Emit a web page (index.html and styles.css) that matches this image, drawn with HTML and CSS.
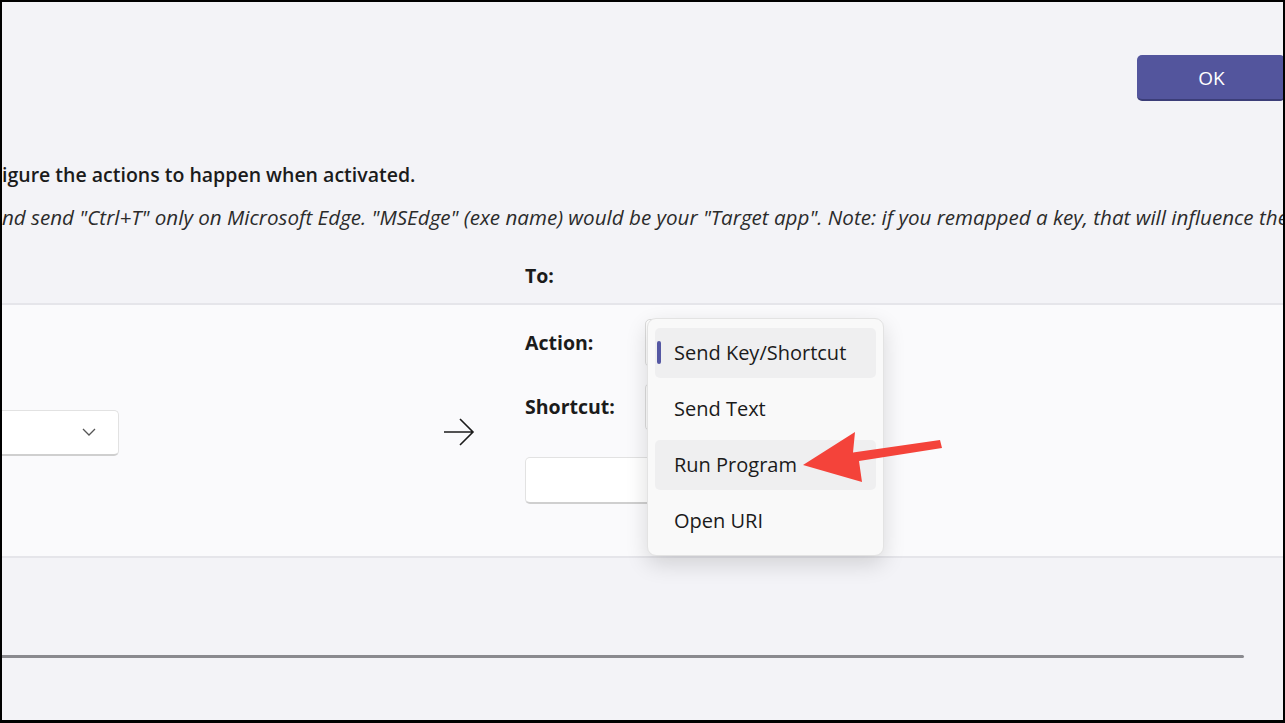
FILE: index.html
```html
<!DOCTYPE html>
<html>

<head>
    <meta name="viewport" content="width=device-width,initial-scale=1.0">
    <title>Remap shortcuts</title>
    <link rel="stylesheet" href="styles.css">
</head>

<body>
    <div class="frame">
        <div class="topbar">
            <button class="okBtn">OK</button>
        </div>

        <p class="title">igure the actions to happen when activated.</p>
        <p class="desc">nd send "Ctrl+T" only on Microsoft Edge. "MSEdge" (exe name) would be your "Target app". Note: if you remapped a key, that will influence the</p>

        <div class="headRow">
            <span class="label toLabel">To:</span>
        </div>

        <div class="panel">
            <div class="fromCol">
                <div class="combo">
                    <svg class="chev" width="14" height="8" viewBox="0 0 14 8">
                        <path d="M1 1 L7 7 L13 1" fill="none" stroke="#555" stroke-width="1.3" />
                    </svg>
                </div>
            </div>

            <div class="arrowCol">
                <svg width="32" height="28" viewBox="0 0 32 28">
                    <path d="M1 14 H30 M17 1 L30 14 L17 27" fill="none" stroke="#1b1b1b" stroke-width="1.6" />
                </svg>
            </div>

            <div class="toCol">
                <div class="row">
                    <span class="label">Action:</span>
                    <div class="miniCombo"></div>
                </div>
                <div class="row">
                    <span class="label">Shortcut:</span>
                    <div class="miniCombo"></div>
                </div>
                <div class="textBox"></div>
            </div>

            <!-- open action dropdown -->
            <ul class="menu">
                <li class="sel"><span class="pill"></span>Send Key/Shortcut</li>
                <li>Send Text</li>
                <li class="hover">Run Program</li>
                <li>Open URI</li>
            </ul>

            <svg class="pointer" width="150" height="60" viewBox="0 0 150 60">
                <polygon points="3,37 55,4 53,24.5 140,12 142,20 59,33 62,54" fill="#f4433a" />
            </svg>
        </div>

        <div class="bottomLine"></div>
    </div>
</body>

</html>
```

FILE: styles.css
```css
html, body {
    margin: 0;
    height: 100%;
    background: #000;
}

body {
    font-family: "Open Sans", "Noto Sans", sans-serif;
    color: #1b1b1b;
}

.frame {
    margin: 2px 2px 3px 2px;
    height: calc(100% - 5px);
    background: #f3f3f7;
    overflow: hidden;
    display: flex;
    flex-direction: column;
}

.topbar {
    display: flex;
    justify-content: flex-end;
    padding-top: 53px;
}

.okBtn {
    width: 148px;
    height: 46px;
    margin-right: -2px;
    border: none;
    border-bottom: 2px solid #3b3d78;
    border-radius: 5px;
    background: #53559d;
    color: #fff;
    font-family: inherit;
    font-size: 19px;
    padding: 0 0 0 1px;
    line-height: 46px;
}

.title {
    margin: 60px 0 0 0;
    font-size: 19.5px;
    font-weight: 600;
    line-height: 28px;
    white-space: nowrap;
}

.desc {
    margin: 14px 0 0 0;
    font-size: 20.6px;
    font-style: italic;
    line-height: 28px;
    white-space: nowrap;
    color: #2b2b2b;
}

.headRow {
    margin-top: 31px;
    height: 28px;
    padding-left: 523px;
    margin-bottom: 13px;
}

.label {
    font-size: 19.5px;
    font-weight: 700;
    line-height: 28px;
}

.panel {
    position: relative;
    height: 251px;
    background: #fafafc;
    border-top: 2px solid #e5e5ea;
    border-bottom: 2px solid #e5e5ea;
    display: flex;
}

.fromCol {
    width: 117px;
    display: flex;
    align-items: center;
}

.combo {
    position: relative;
    width: 162px;
    height: 46px;
    margin-left: -44px;
    margin-top: 5px;
    box-sizing: border-box;
    background: #fff;
    border: 1px solid #e2e2e2;
    border-bottom: 2px solid #cfcfcf;
    border-radius: 5px;
}

.chev {
    position: absolute;
    right: 22px;
    top: 17px;
}

.arrowCol {
    width: 356px;
    display: flex;
    align-items: center;
    justify-content: flex-end;
    padding-top: 3px;
}

.toCol {
    margin-left: 50px;
    padding-top: 24px;
    display: flex;
    flex-direction: column;
}

.row {
    display: flex;
    align-items: center;
    height: 28px;
    margin-bottom: 36px;
}

.row .label {
    width: 120px;
}

.miniCombo {
    width: 200px;
    height: 48px;
    box-sizing: border-box;
    background: #fff;
    border: 1px solid #dcdcdc;
    border-radius: 5px;
}

.textBox {
    width: 240px;
    height: 47px;
    box-sizing: border-box;
    background: #fff;
    border: 1px solid #e2e2e2;
    border-bottom: 2px solid #cfcfcf;
    border-radius: 5px;
}

.menu {
    position: absolute;
    left: 645px;
    top: 13px;
    width: 237px;
    height: 238px;
    box-sizing: border-box;
    margin: 0;
    padding: 9px 7px;
    list-style-type: none;
    background: #f9f9f9;
    border: 1px solid #e3e3e3;
    border-radius: 9px;
    box-shadow: 0 8px 22px rgba(0, 0, 0, 0.14);
    display: flex;
    flex-direction: column;
    gap: 6px;
}

.menu>li {
    position: relative;
    height: 50px;
    line-height: 50px;
    padding-left: 19px;
    border-radius: 5px;
    font-size: 20px;
    color: #1b1b1b;
}

.menu>li.sel,
.menu>li.hover {
    background: #efeff0;
}

.pill {
    position: absolute;
    left: 2px;
    top: 13px;
    width: 4px;
    height: 23px;
    border-radius: 2px;
    background: #5558a3;
}

.pointer {
    position: absolute;
    left: 798px;
    top: 123px;
}

.bottomLine {
    margin-top: 97px;
    width: 1242px;
    height: 3px;
    border-radius: 0 2px 2px 0;
    background: #8a8a8f;
}
```
